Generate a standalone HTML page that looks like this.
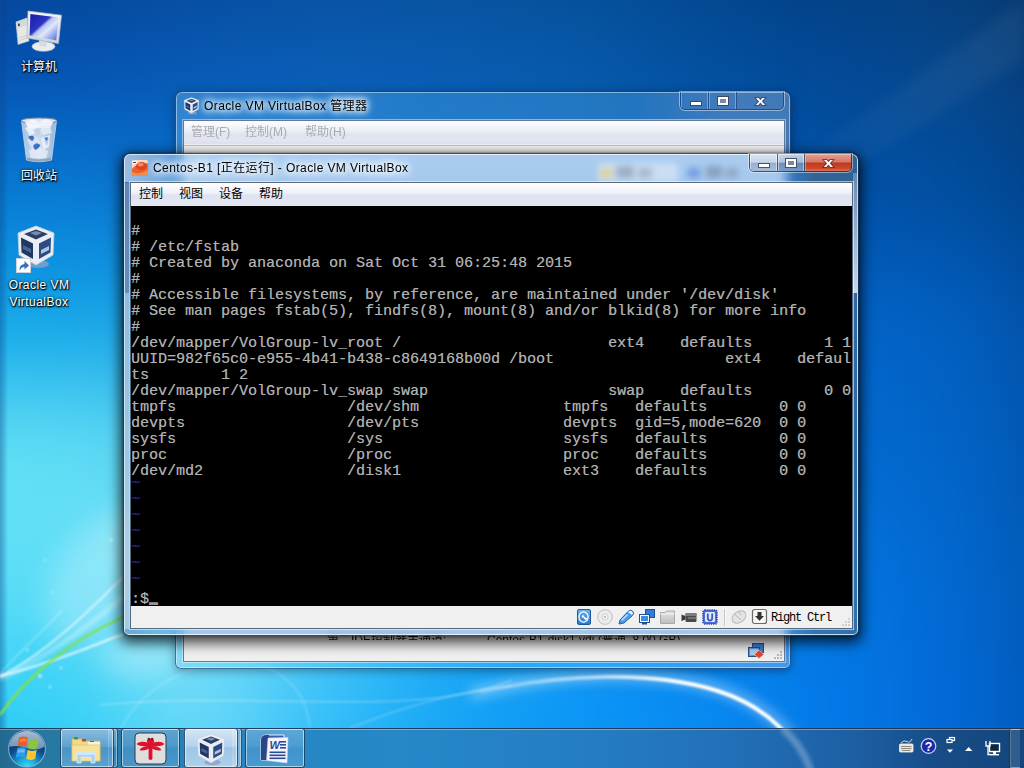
<!DOCTYPE html>
<html lang="zh-CN">
<head>
<meta charset="utf-8">
<title>Centos-B1 - Oracle VM VirtualBox</title>
<style>
html,body{margin:0;padding:0;}
body{width:1024px;height:768px;overflow:hidden;position:relative;font-family:"Liberation Sans","Noto Sans CJK SC",sans-serif;font-size:12px;color:#000;}
.abs{position:absolute;}
#wall{position:absolute;left:0;top:0;width:1024px;height:768px;overflow:hidden;
 background:
  radial-gradient(ellipse 560px 440px at 90px 570px, rgba(98,224,247,1) 0%, rgba(92,220,247,.95) 28%, rgba(35,185,240,.85) 50%, rgba(12,140,225,.55) 75%, rgba(8,110,210,0) 100%),
  radial-gradient(ellipse 760px 300px at 150px 800px, rgba(90,212,248,.95) 0%, rgba(50,190,248,.85) 45%, rgba(10,140,240,0) 100%),
  linear-gradient(90deg, rgba(0,0,0,0) 0%, rgba(0,0,0,0) 88%, rgba(0,20,60,.16) 100%),
  linear-gradient(180deg, #05479f 0%, #0755b0 12%, #0560c0 30%, #036acf 48%, #036cd4 65%, #0376e4 85%, #037aea 100%);
}
#wallsvg{position:absolute;left:0;top:0;}
/* desktop icons */
.dicon{position:absolute;width:78px;text-align:center;color:#fff;font-size:12px;line-height:17px;
 text-shadow:0 1px 2px rgba(0,0,0,0.95),0 0 3px rgba(0,0,0,0.8),1px 1px 1px rgba(0,0,0,0.9);}
.dicon svg{display:block;margin:0 auto;}
/* windows */
.win{position:absolute;border-radius:7px 7px 6px 6px;box-sizing:border-box;}
.ttl{position:absolute;white-space:nowrap;font-size:12px;line-height:16px;color:#000;
 text-shadow:0 0 6px #fff,0 0 6px #fff,0 0 9px #fff,0 0 12px rgba(255,255,255,.9);}
.capbtns{position:absolute;top:0;height:18px;border:1px solid rgba(30,50,80,.75);border-top:none;border-radius:0 0 5px 5px;box-sizing:border-box;overflow:hidden;
 box-shadow:0 0 0 1px rgba(255,255,255,.45);}
.capbtns div{position:absolute;top:0;height:18px;box-sizing:border-box;}
.menubar{position:absolute;white-space:nowrap;font-size:12px;line-height:22px;}
.menubar span{position:absolute;top:0;}
#term{position:absolute;left:131px;top:206px;width:721px;height:400px;background:#000;overflow:hidden;}
#term pre{margin:0;position:absolute;left:0;top:2px;font-family:"Liberation Mono",monospace;font-weight:normal;font-size:15px;line-height:16px;color:#b2b2b2;letter-spacing:0;text-shadow:.3px 0 0 #6a6a6a;}
#term pre i{font-style:normal;color:#15158c;position:relative;top:-4px;}
#term pre b{color:#fff;text-shadow:0 -1px 0 #fff,0 -1.6px 0 #ddd;}
/* taskbar */
#taskbar{position:absolute;left:0;top:728px;width:1024px;height:40px;overflow:hidden;
 background:linear-gradient(90deg, #22688f 0px, #26789f 40px, #267aa6 70px, #2785c0 250px, #2688c8 400px, #247cc1 600px, #2270b8 728px, #1c5ea2 860px, #174c86 940px, #14467d 1024px);
 box-shadow:inset 0 1px 0 rgba(20,40,70,.85), inset 0 2px 0 rgba(255,255,255,.35);}
.tb{position:absolute;top:0px;height:40px;box-sizing:border-box;border:1px solid rgba(20,50,80,.8);border-radius:3px;
 background:linear-gradient(180deg, rgba(255,255,255,.45) 0%, rgba(255,255,255,.25) 45%, rgba(255,255,255,.08) 50%, rgba(255,255,255,.15) 100%);
 box-shadow:inset 0 0 0 1px rgba(255,255,255,.55);}
.tb svg{margin-top:1px;}
</style>
</head>
<body>
<div id="wall"></div>
<svg id="wallmesh" width="1024" height="768" viewBox="0 0 1024 768" style="position:absolute;left:0;top:0">
<defs><filter id="meshblur" color-interpolation-filters="sRGB" filterUnits="userSpaceOnUse" x="-256" y="-256" width="1536" height="1280"><feGaussianBlur stdDeviation="55"/></filter></defs>
<g filter="url(#meshblur)">
<rect x="-256" y="-256" width="129" height="129" fill="#044190"/>
<rect x="-128" y="-256" width="129" height="129" fill="#044190"/>
<rect x="0" y="-256" width="129" height="129" fill="#044190"/>
<rect x="128" y="-256" width="129" height="129" fill="#064893"/>
<rect x="256" y="-256" width="129" height="129" fill="#084b95"/>
<rect x="384" y="-256" width="129" height="129" fill="#074b91"/>
<rect x="512" y="-256" width="129" height="129" fill="#05498d"/>
<rect x="640" y="-256" width="129" height="129" fill="#024183"/>
<rect x="768" y="-256" width="129" height="129" fill="#013b7a"/>
<rect x="896" y="-256" width="129" height="129" fill="#063b72"/>
<rect x="1024" y="-256" width="129" height="129" fill="#062e5b"/>
<rect x="1152" y="-256" width="129" height="129" fill="#062e5b"/>
<rect x="-256" y="-128" width="129" height="129" fill="#044190"/>
<rect x="-128" y="-128" width="129" height="129" fill="#044190"/>
<rect x="0" y="-128" width="129" height="129" fill="#044190"/>
<rect x="128" y="-128" width="129" height="129" fill="#064893"/>
<rect x="256" y="-128" width="129" height="129" fill="#084b95"/>
<rect x="384" y="-128" width="129" height="129" fill="#074b91"/>
<rect x="512" y="-128" width="129" height="129" fill="#05498d"/>
<rect x="640" y="-128" width="129" height="129" fill="#024183"/>
<rect x="768" y="-128" width="129" height="129" fill="#013b7a"/>
<rect x="896" y="-128" width="129" height="129" fill="#063b72"/>
<rect x="1024" y="-128" width="129" height="129" fill="#062e5b"/>
<rect x="1152" y="-128" width="129" height="129" fill="#062e5b"/>
<rect x="-256" y="0" width="129" height="129" fill="#0550b0"/>
<rect x="-128" y="0" width="129" height="129" fill="#0550b0"/>
<rect x="0" y="0" width="129" height="129" fill="#0550b0"/>
<rect x="128" y="0" width="129" height="129" fill="#0858b4"/>
<rect x="256" y="0" width="129" height="129" fill="#0a5cb6"/>
<rect x="384" y="0" width="129" height="129" fill="#095cb2"/>
<rect x="512" y="0" width="129" height="129" fill="#075aac"/>
<rect x="640" y="0" width="129" height="129" fill="#0350a0"/>
<rect x="768" y="0" width="129" height="129" fill="#024896"/>
<rect x="896" y="0" width="129" height="129" fill="#08488c"/>
<rect x="1024" y="0" width="129" height="129" fill="#083870"/>
<rect x="1152" y="0" width="129" height="129" fill="#083870"/>
<rect x="-256" y="128" width="129" height="129" fill="#087ad4"/>
<rect x="-128" y="128" width="129" height="129" fill="#087ad4"/>
<rect x="0" y="128" width="129" height="129" fill="#087ad4"/>
<rect x="128" y="128" width="129" height="129" fill="#0a70cd"/>
<rect x="256" y="128" width="129" height="129" fill="#0969c6"/>
<rect x="384" y="128" width="129" height="129" fill="#0762be"/>
<rect x="512" y="128" width="129" height="129" fill="#055cb6"/>
<rect x="640" y="128" width="129" height="129" fill="#0356ae"/>
<rect x="768" y="128" width="129" height="129" fill="#0250a6"/>
<rect x="896" y="128" width="129" height="129" fill="#004ea0"/>
<rect x="1024" y="128" width="129" height="129" fill="#003c80"/>
<rect x="1152" y="128" width="129" height="129" fill="#003c80"/>
<rect x="-256" y="256" width="129" height="129" fill="#10a6e9"/>
<rect x="-128" y="256" width="129" height="129" fill="#10a6e9"/>
<rect x="0" y="256" width="129" height="129" fill="#10a6e9"/>
<rect x="128" y="256" width="129" height="129" fill="#1ea0e6"/>
<rect x="256" y="256" width="129" height="129" fill="#148cde"/>
<rect x="384" y="256" width="129" height="129" fill="#0a7dd7"/>
<rect x="512" y="256" width="129" height="129" fill="#0670d0"/>
<rect x="640" y="256" width="129" height="129" fill="#0369cc"/>
<rect x="768" y="256" width="129" height="129" fill="#0265ca"/>
<rect x="896" y="256" width="129" height="129" fill="#025fc0"/>
<rect x="1024" y="256" width="129" height="129" fill="#024a99"/>
<rect x="1152" y="256" width="129" height="129" fill="#024a99"/>
<rect x="-256" y="384" width="129" height="129" fill="#64e1f5"/>
<rect x="-128" y="384" width="129" height="129" fill="#64e1f5"/>
<rect x="0" y="384" width="129" height="129" fill="#64e1f5"/>
<rect x="128" y="384" width="129" height="129" fill="#5acdf3"/>
<rect x="256" y="384" width="129" height="129" fill="#32afee"/>
<rect x="384" y="384" width="129" height="129" fill="#1996e8"/>
<rect x="512" y="384" width="129" height="129" fill="#0a82e1"/>
<rect x="640" y="384" width="129" height="129" fill="#0573d7"/>
<rect x="768" y="384" width="129" height="129" fill="#026ad0"/>
<rect x="896" y="384" width="129" height="129" fill="#0264c8"/>
<rect x="1024" y="384" width="129" height="129" fill="#024ea0"/>
<rect x="1152" y="384" width="129" height="129" fill="#024ea0"/>
<rect x="-256" y="512" width="129" height="129" fill="#5fdef7"/>
<rect x="-128" y="512" width="129" height="129" fill="#5fdef7"/>
<rect x="0" y="512" width="129" height="129" fill="#5fdef7"/>
<rect x="128" y="512" width="129" height="129" fill="#78def6"/>
<rect x="256" y="512" width="129" height="129" fill="#50c8f5"/>
<rect x="384" y="512" width="129" height="129" fill="#28aaf0"/>
<rect x="512" y="512" width="129" height="129" fill="#1294ec"/>
<rect x="640" y="512" width="129" height="129" fill="#0882e6"/>
<rect x="768" y="512" width="129" height="129" fill="#0376e1"/>
<rect x="896" y="512" width="129" height="129" fill="#0268d0"/>
<rect x="1024" y="512" width="129" height="129" fill="#0251a6"/>
<rect x="1152" y="512" width="129" height="129" fill="#0251a6"/>
<rect x="-256" y="640" width="129" height="129" fill="#34d0f7"/>
<rect x="-128" y="640" width="129" height="129" fill="#34d0f7"/>
<rect x="0" y="640" width="129" height="129" fill="#34d0f7"/>
<rect x="128" y="640" width="129" height="129" fill="#7ddef7"/>
<rect x="256" y="640" width="129" height="129" fill="#3ac3fa"/>
<rect x="384" y="640" width="129" height="129" fill="#18a7f5"/>
<rect x="512" y="640" width="129" height="129" fill="#0c96f7"/>
<rect x="640" y="640" width="129" height="129" fill="#088af2"/>
<rect x="768" y="640" width="129" height="129" fill="#0378e8"/>
<rect x="896" y="640" width="129" height="129" fill="#0268d6"/>
<rect x="1024" y="640" width="129" height="129" fill="#0251ab"/>
<rect x="1152" y="640" width="129" height="129" fill="#0251ab"/>
<rect x="-256" y="768" width="129" height="129" fill="#17c1f7"/>
<rect x="-128" y="768" width="129" height="129" fill="#17c1f7"/>
<rect x="0" y="768" width="129" height="129" fill="#17c1f7"/>
<rect x="128" y="768" width="129" height="129" fill="#38cef7"/>
<rect x="256" y="768" width="129" height="129" fill="#1ab5fa"/>
<rect x="384" y="768" width="129" height="129" fill="#0a9bf5"/>
<rect x="512" y="768" width="129" height="129" fill="#0c96f7"/>
<rect x="640" y="768" width="129" height="129" fill="#088af2"/>
<rect x="768" y="768" width="129" height="129" fill="#0378e8"/>
<rect x="896" y="768" width="129" height="129" fill="#0268d6"/>
<rect x="1024" y="768" width="129" height="129" fill="#0251ab"/>
<rect x="1152" y="768" width="129" height="129" fill="#0251ab"/>
<rect x="-256" y="896" width="129" height="129" fill="#17c1f7"/>
<rect x="-128" y="896" width="129" height="129" fill="#17c1f7"/>
<rect x="0" y="896" width="129" height="129" fill="#17c1f7"/>
<rect x="128" y="896" width="129" height="129" fill="#38cef7"/>
<rect x="256" y="896" width="129" height="129" fill="#1ab5fa"/>
<rect x="384" y="896" width="129" height="129" fill="#0a9bf5"/>
<rect x="512" y="896" width="129" height="129" fill="#0c96f7"/>
<rect x="640" y="896" width="129" height="129" fill="#088af2"/>
<rect x="768" y="896" width="129" height="129" fill="#0378e8"/>
<rect x="896" y="896" width="129" height="129" fill="#0268d6"/>
<rect x="1024" y="896" width="129" height="129" fill="#0251ab"/>
<rect x="1152" y="896" width="129" height="129" fill="#0251ab"/>
</g></svg>
<svg id="wallsvg" width="1024" height="768" viewBox="0 0 1024 768">
 <defs>
  <filter id="bl2" color-interpolation-filters="sRGB"><feGaussianBlur stdDeviation="2"/></filter>
  <filter id="bl1" color-interpolation-filters="sRGB"><feGaussianBlur stdDeviation="0.8"/></filter>
  <filter id="bl14" color-interpolation-filters="sRGB" x="-50%" y="-50%" width="200%" height="200%"><feGaussianBlur stdDeviation="14"/></filter>
  <filter id="bl6" color-interpolation-filters="sRGB"><feGaussianBlur stdDeviation="6"/></filter>
  <linearGradient id="edgeL" x1="0" x2="1" y1="0" y2="0"><stop offset="0" stop-color="#0a4a90" stop-opacity=".42"/><stop offset="1" stop-color="#062c70" stop-opacity="0"/></linearGradient>
  <linearGradient id="arcg" gradientUnits="userSpaceOnUse" x1="470" y1="0" x2="820" y2="0"><stop offset="0" stop-color="#fff" stop-opacity=".15"/><stop offset=".3" stop-color="#fff" stop-opacity=".55"/><stop offset=".6" stop-color="#fff" stop-opacity="1"/><stop offset="1" stop-color="#fff" stop-opacity="1"/></linearGradient>
  <linearGradient id="ray" x1="1" y1="0" x2="0" y2="1"><stop offset="0" stop-color="#9ab" stop-opacity=".09"/><stop offset="1" stop-color="#fff" stop-opacity="0"/></linearGradient>
 </defs>
 <rect x="0" y="0" width="8" height="768" fill="url(#edgeL)"/>
 <polygon points="1024,0 1024,60 760,230 700,230" fill="url(#ray)" filter="url(#bl6)"/>
 <!-- big white arc bottom right -->
 <path d="M470 694 C560 672 650 668 720 690 C770 706 800 740 812 775" fill="none" stroke="#fff" stroke-opacity=".35" stroke-width="12" filter="url(#bl6)"/>
 <path d="M480 692 C560 674 650 670 718 691 C768 707 798 740 810 775" fill="none" stroke="url(#arcg)" stroke-width="4" filter="url(#bl1)"/>
 <!-- faint arcs bottom middle -->
 <path d="M120 730 C160 650 300 630 310 728" fill="none" stroke="#fff" stroke-opacity=".18" stroke-width="2" filter="url(#bl1)"/>
 <path d="M100 705 C250 690 420 720 512 680" fill="none" stroke="#fff" stroke-opacity=".22" stroke-width="2" filter="url(#bl1)"/>
 <path d="M350 728 C420 700 470 690 512 686" fill="none" stroke="#fff" stroke-opacity=".2" stroke-width="2" filter="url(#bl1)"/>
 <!-- left streaks -->
 <ellipse cx="100" cy="575" rx="42" ry="75" fill="#fff" fill-opacity=".26" filter="url(#bl14)" transform="rotate(35 100 575)"/>
 <ellipse cx="140" cy="655" rx="42" ry="22" fill="#fff" fill-opacity=".3" filter="url(#bl14)"/>
 <path d="M0 677 C50 650 90 610 124 576" fill="none" stroke="#fff" stroke-opacity=".6" stroke-width="2" filter="url(#bl1)"/>
 <path d="M0 679 C50 655 95 622 124 596" fill="none" stroke="#fff" stroke-opacity=".4" stroke-width="4" filter="url(#bl2)"/>
 <path d="M0 676 C60 661 100 642 124 634" fill="none" stroke="#fff" stroke-opacity=".7" stroke-width="2.4" filter="url(#bl1)"/>
 <path d="M0 674 C20 650 45 630 62 610" fill="none" stroke="#fff" stroke-opacity=".3" stroke-width="1.5" filter="url(#bl1)"/>
 <path d="M0 715 C30 672 75 638 124 617" fill="none" stroke="#84e048" stroke-opacity="1" stroke-width="2.4" filter="url(#bl1)"/>
 <g fill="#fff" fill-opacity=".7" filter="url(#bl1)"><circle cx="111" cy="540" r="1.6"/><circle cx="45" cy="560" r="1"/><circle cx="27" cy="650" r="1.2"/><circle cx="53" cy="592" r="1"/><circle cx="40" cy="676" r="1.8"/><circle cx="61" cy="668" r="1.2"/><circle cx="50" cy="687" r="1.2"/></g>
</svg>

<svg width="0" height="0" style="position:absolute">
 <defs>
  <linearGradient id="scr" x1="0" y1="0" x2="1" y2="1"><stop offset="0" stop-color="#1a1aa0"/><stop offset=".4" stop-color="#2a36c4"/><stop offset=".47" stop-color="#b8c2f2"/><stop offset=".62" stop-color="#e2e8fb"/><stop offset="1" stop-color="#4a60dc"/></linearGradient>
  <linearGradient id="bez" x1="0" y1="0" x2="0" y2="1"><stop offset="0" stop-color="#f4f7fb"/><stop offset="1" stop-color="#c9d2dd"/></linearGradient>
  <linearGradient id="bin" x1="0" y1="0" x2="1" y2="0"><stop offset="0" stop-color="#b9cde6"/><stop offset=".5" stop-color="#e6eef8"/><stop offset="1" stop-color="#a9bfdc"/></linearGradient>
  <linearGradient id="cubeL" x1="0" y1="0" x2="1" y2="1"><stop offset="0" stop-color="#f2f5fa"/><stop offset="1" stop-color="#aebcd4"/></linearGradient>
  <symbol id="vbox" viewBox="0 0 40 44">
   <ellipse cx="22" cy="39" rx="11" ry="4" fill="#8aa0c4" opacity=".8"/>
   <path d="M20 1 L38 8 L37 30 L20 40 L3 30 L2 8 Z" fill="#e9eef6" stroke="#c2cde0" stroke-width=".8" stroke-linejoin="round"/>
   <path d="M20 4.5 L32 9 L20 14.5 L8 9 Z" fill="#2b3f66"/>
   <path d="M5 12.5 L17 18.5 L17 34 L5.5 27.5 Z" fill="#1f3763"/>
   <path d="M23 18.5 L35 12.5 L34.5 27.5 L23 34 Z" fill="#2c4a84"/>
   <path d="M14 8 l6 -2 l6 2 l-6 2.4z" fill="#8fa0bd" opacity=".8"/>
   <path d="M7 20 l8 4 v4 l-8 -4z" fill="#5d78a8" opacity=".7"/>
   <path d="M25 25 l8 -4 v4 l-8 4z" fill="#c9d6ee" opacity=".85"/>
  </symbol>
 </defs>
</svg>
<div class="dicon" style="left:0;top:8px;">
 <svg width="52" height="48" viewBox="0 0 52 48">
  <path d="M3 14 L14 10 L16 33 L5 36.5 Z" fill="#e6e8e3" stroke="#b8bfc4" stroke-width=".6"/>
  <path d="M3 14 L14 10 L14.4 17 L3.4 21 Z" fill="#d3d8da"/>
  <rect x="5" y="15.6" width="1.8" height="2.4" fill="#364a2e"/>
  <path d="M6 30 L15 27 M6.2 32.5 L15.2 29.5" stroke="#c3c9cc" stroke-width=".8"/>
  <ellipse cx="30.5" cy="38.5" rx="11.5" ry="4.8" fill="#e9edf0" stroke="#b5bdc6" stroke-width=".7"/>
  <path d="M26 31 L34 33 L33.5 39 L26.5 38 Z" fill="#d5dbe2"/>
  <path d="M15 3 L48.5 7.2 L45.5 35.6 L14 30 Z" fill="url(#bez)" stroke="#aeb8c6" stroke-width=".7" stroke-linejoin="round"/>
  <path d="M17.4 6 L45.6 9.6 L43.2 32.2 L16.6 27.4 Z" fill="url(#scr)"/>
 </svg>
 <div style="margin-top:3px">计算机</div>
</div>
<div class="dicon" style="left:0;top:116px;">
 <svg width="40" height="48" viewBox="0 0 40 48">
  <path d="M2.5 4.5 L37.5 4.5 L32.5 44 Q20 47.5 7.5 44 Z" fill="url(#bin)" fill-opacity=".88" stroke="#c9d8ec" stroke-width=".8"/>
  <ellipse cx="20" cy="4.8" rx="17.5" ry="2.8" fill="#dbe6f3" stroke="#7f8ea4" stroke-width="1.1"/>
  <path d="M6 6 L14 3 L20 6.5 L27 2.5 L34 6 L31 12 L9 12 Z" fill="#f2f6fb" opacity=".95"/>
  <path d="M9.5 21 q4 -3 6 1 l-2 3 q-3 -1 -4 -4z M14 30 q3 -5 7 -1 q-1 4 -5 5z M25 22 l4 -1 l-1 4z" fill="#2f66c8" opacity=".85"/>
  <g opacity=".8"><path d="M6 12 L14 9 L18 16 L11 20Z" fill="#f4f7fb"/><path d="M19 10 L30 8 L33 17 L24 19Z" fill="#e9eef6"/><path d="M8 24 L16 20 L22 27 L13 33Z" fill="#dfe7f2"/><path d="M22 22 L31 19 L30 31 L24 34Z" fill="#f0f4fa"/><path d="M10 34 L20 31 L29 35 L27 42 L12 42Z" fill="#e6ecf5"/><path d="M14 14 L22 12 L20 22Z" fill="#c2cfe2"/><path d="M25 24 L30 22 L28 30Z" fill="#bccbe0"/></g>
  <path d="M9.5 21 q4 -3 6 1 l-2 3 q-3 -1 -4 -4z M14 30 q3 -5 7 -1 q-1 4 -5 5z M25 22 l4 -1 l-1 4z" fill="#2f66c8" opacity=".85"/>
  <path d="M8 44 Q20 47.5 32 44 L32.3 41.5 Q20 45 7.7 41.5Z" fill="#8f98a6" opacity=".8"/>
 </svg>
 <div style="margin-top:4px">回收站</div>
</div>
<div class="dicon" style="left:0;top:225px;">
 <div style="position:relative;width:48px;height:48px;margin:0 auto;">
  <svg width="40" height="44" style="position:absolute;left:1px;top:0"><use href="#vbox" width="40" height="44"/></svg>
  <svg width="15" height="15" viewBox="0 0 15 15" style="position:absolute;left:1px;top:33px">
   <rect x=".5" y=".5" width="14" height="14" fill="#fdfdfd" stroke="#c9d2de"/>
   <path d="M3.5 13 Q3 6.5 8.5 6 L8.5 3 L13 7.5 L8.5 11.5 L8.5 9 Q5 9 3.5 13Z" fill="#2f6fc4"/>
  </svg>
 </div>
 <div style="margin-top:4px;line-height:17px;letter-spacing:.45px">Oracle VM<br>VirtualBox</div>
</div>

<div class="win" id="bw" style="left:175px;top:91px;width:616px;height:578px;border:1px solid rgba(10,30,70,.55);
 background:linear-gradient(90deg, rgba(140,215,255,.3) 0%, rgba(110,210,255,.25) 40%, rgba(120,205,255,.26) 75%, rgba(190,205,235,.34) 90%, rgba(190,205,235,.34) 100%);
 -webkit-backdrop-filter:blur(3px);backdrop-filter:blur(3px);
 box-shadow:inset 0 0 0 1px rgba(255,255,255,.45), 0 2px 10px rgba(0,0,0,.35);">
 <svg width="17" height="18" style="position:absolute;left:7px;top:5px"><use href="#vbox" width="17" height="18"/></svg>
 <div class="ttl" style="left:28px;top:6px;letter-spacing:.4px;">Oracle VM VirtualBox 管理器</div>
 <div class="capbtns" style="left:504px;width:104px;border-color:rgba(15,40,90,.55);">
  <div style="left:0;width:28px;border-right:1px solid rgba(15,40,90,.5);box-shadow:inset -1px 0 0 rgba(255,255,255,.3), inset 1px 0 0 rgba(255,255,255,.3)"></div>
  <div style="left:28px;width:28px;border-right:1px solid rgba(15,40,90,.5);box-shadow:inset -1px 0 0 rgba(255,255,255,.3), inset 1px 0 0 rgba(255,255,255,.3)"></div>
  <svg width="104" height="18" viewBox="0 0 104 18" style="position:absolute;left:-1px;top:0">
   <rect x="10.5" y="9.5" width="11" height="4" fill="#fff" stroke="#3a4a66" stroke-width="1"/>
   <rect x="39" y="6" width="8" height="6" fill="none" stroke="#3a4a66" stroke-width="4"/>
   <rect x="39" y="6" width="8" height="6" fill="#7b8aa6" stroke="#fff" stroke-width="2"/>
   <text x="80.5" y="13.4" font-family="Liberation Sans,sans-serif" font-weight="bold" font-size="13.5" text-anchor="middle" fill="#fff" stroke="#3a4a66" stroke-opacity=".85" stroke-width="1.8" paint-order="stroke" transform="translate(80.5 0) scale(1.25 1) translate(-80.5 0)">x</text>
  </svg>
 </div>
 <!-- client -->
 <div style="position:absolute;left:7px;top:28px;width:602px;height:542px;box-sizing:border-box;border:1px solid rgba(40,70,110,.7);background:#f0f0f0;overflow:hidden;box-shadow:0 0 0 1px rgba(255,255,255,.45);">
  <div class="menubar" style="left:0;top:0;width:600px;height:23px;background:linear-gradient(180deg,#fdfdff 0%,#eef0f8 40%,#dfe3f1 60%,#e6e9f4 100%);border-bottom:1px solid #f7f8fc;color:#aaaab2;">
   <span style="left:7px">管理(F)</span><span style="left:61px">控制(M)</span><span style="left:121px">帮助(H)</span>
  </div>
  <div style="position:absolute;left:0;top:24px;width:600px;height:60px;background:linear-gradient(180deg,#fbfbfb 0%,#e9e9e9 100%);border-top:1px solid #c9c9c9;"></div>
  <!-- bottom visible part -->
  <div style="position:absolute;left:0;top:500px;width:600px;height:40px;background:#f0f0f0;"></div>
  <div style="position:absolute;left:0;top:513px;width:600px;height:6px;overflow:hidden;">
   <div style="position:absolute;left:143px;top:-1px;font-size:12px;line-height:14px;white-space:nowrap;color:#111;">第二IDE控制器主通道:</div>
   <div style="position:absolute;left:303px;top:-1px;font-size:12px;line-height:14px;white-space:nowrap;color:#111;">Centos-B1-disk1.vdi (普通, 8.00 GB)</div>
  </div>
  <svg width="18" height="17" viewBox="0 0 18 17" style="position:absolute;left:563px;top:521px">
   <rect x="5.5" y="1.5" width="11" height="9" fill="#3d7fd0" stroke="#2a4f86"/>
   <rect x="1.5" y="5.5" width="11" height="9" fill="#5b9be2" stroke="#2a4f86"/>
   <rect x="3" y="7" width="8" height="6" fill="#a9cdf4"/>
   <path d="M12 8 L17 12.5 L12 16.5 L7.5 12.5 Z" fill="#e0482c" stroke="#f6c7b8" stroke-width=".8"/>
  </svg>
  <svg width="10" height="10" viewBox="0 0 10 10" style="position:absolute;left:589px;top:529px"><g fill="#b8b8b8"><rect x="7" y="1" width="2" height="2"/><rect x="7" y="4" width="2" height="2"/><rect x="4" y="4" width="2" height="2"/><rect x="7" y="7" width="2" height="2"/><rect x="4" y="7" width="2" height="2"/><rect x="1" y="7" width="2" height="2"/></g></svg>
 </div>
</div>

<div class="win" id="fw" style="left:123px;top:153px;width:736px;height:483px;border:1px solid rgba(10,25,50,.7);
 background:linear-gradient(90deg, rgba(85,125,180,.55) 0px, rgba(96,164,232,.52) 52px, rgba(96,164,232,.52) 662px, rgba(85,112,140,.55) 690px, rgba(85,112,135,.55) 736px);
 -webkit-backdrop-filter:blur(4px);backdrop-filter:blur(4px);
 box-shadow:inset 0 0 0 1px rgba(255,255,255,.75), 0 4px 13px 3px rgba(0,0,0,.72), 0 0 3px rgba(0,0,0,.5);">
 <div style="position:absolute;left:0;top:0;width:734px;height:28px;border-radius:6px 6px 0 0;background:linear-gradient(90deg, rgba(228,236,246,.6) 0px, rgba(228,236,246,.35) 40px, rgba(228,236,246,0) 90px);"></div>
 <!-- title icon -->
 <svg width="16" height="16" viewBox="0 0 16 16" style="position:absolute;left:8px;top:6px">
  <rect x="0" y="0" width="16" height="16" rx="1.5" fill="#f6d9c8"/>
  <path d="M0 16 L0 9 Q4 4 10 5 L16 3 L16 16 Z" fill="#e8602c"/>
  <ellipse cx="9.5" cy="6" rx="5.5" ry="4" fill="#e0401c"/>
  <ellipse cx="8.5" cy="4.6" rx="3.2" ry="1.8" fill="#f59a7a" opacity=".8"/>
  <path d="M0 16 L0 12 Q8 15 16 10 L16 16Z" fill="#f28a4a"/>
  <rect x="0" y="1" width="5" height="3" fill="#f7f1ea"/>
  <rect x="1" y="2" width="3" height="1" fill="#444"/>
 </svg>
 <div class="ttl" style="left:29px;top:6px;letter-spacing:.4px;">Centos-B1 [正在运行] - Oracle VM VirtualBox</div>
 <!-- blurred blobs behind glass -->
 <div style="position:absolute;left:474px;top:9px;width:80px;height:19px;background:rgba(255,255,255,.4);filter:blur(3px);"></div>
 <div style="position:absolute;left:474px;top:12px;width:60px;height:14px;filter:blur(3px);opacity:.5;">
  <div style="position:absolute;left:2px;top:2px;width:12px;height:10px;background:#e9c84a"></div>
  <div style="position:absolute;left:18px;top:0;width:18px;height:12px;background:#6f7f9a"></div>
  <div style="position:absolute;left:40px;top:2px;width:14px;height:10px;background:#8a93a6"></div>
 </div>
 <div style="position:absolute;left:562px;top:12px;width:60px;height:14px;filter:blur(3px);opacity:.5;">
  <div style="position:absolute;left:2px;top:2px;width:12px;height:10px;background:#3d6fd8"></div>
  <div style="position:absolute;left:20px;top:0;width:16px;height:12px;background:#6a7a90"></div>
  <div style="position:absolute;left:40px;top:2px;width:12px;height:10px;background:#7a8598"></div>
 </div>
 <div class="capbtns" style="left:625px;width:103px;border-color:rgba(40,50,70,.8);">
  <div style="left:0;width:28px;border-right:1px solid rgba(40,50,70,.75);background:linear-gradient(180deg,rgba(222,231,243,.9) 0%,rgba(200,213,232,.9) 45%,rgba(150,172,204,.9) 52%,rgba(165,188,220,.9) 100%);box-shadow:inset 0 0 0 1px rgba(255,255,255,.5)"></div>
  <div style="left:28px;width:27px;border-right:1px solid rgba(40,50,70,.75);background:linear-gradient(180deg,rgba(205,218,236,.9) 0%,rgba(176,196,222,.9) 45%,rgba(108,138,182,.9) 52%,rgba(125,158,204,.9) 100%);box-shadow:inset 0 0 0 1px rgba(255,255,255,.45)"></div>
  <div style="left:55px;width:47px;background:linear-gradient(180deg,#e2a092 0%,#d57a66 42%,#c2391e 52%,#cc4a2e 80%,#df8466 100%);box-shadow:inset 0 0 0 1px rgba(255,255,255,.35)"></div>
  <svg width="103" height="18" viewBox="0 0 103 18" style="position:absolute;left:-1px;top:0">
   <rect x="9.5" y="9.5" width="11" height="4" fill="#fff" stroke="#4a5366" stroke-width="1"/>
   <rect x="38" y="6" width="8" height="6" fill="none" stroke="#454e62" stroke-width="4"/>
   <rect x="38" y="6" width="8" height="6" fill="#7d879c" stroke="#fff" stroke-width="2"/>
   <text x="79.4" y="13.4" font-family="Liberation Sans,sans-serif" font-weight="bold" font-size="13.5" text-anchor="middle" fill="#fff" stroke="#6a2a20" stroke-opacity=".8" stroke-width="1.8" paint-order="stroke" transform="translate(79.4 0) scale(1.25 1) translate(-79.4 0)">x</text>
  </svg>
 </div>
 <div style="position:absolute;left:729px;top:19px;width:4px;height:120px;background:linear-gradient(180deg, rgba(170,185,210,.45), rgba(225,235,248,.85));"></div>
 <div style="position:absolute;left:1px;top:29px;width:4px;height:110px;background:rgba(150,150,172,.45);"></div>
 <div style="position:absolute;left:1px;top:139px;width:4px;height:336px;background:rgba(225,238,250,.5);"></div>
 <!-- client -->
 <div style="position:absolute;left:6px;top:28px;width:723px;height:447px;box-sizing:border-box;border:1px solid rgba(60,80,105,.85);background:#f0f0f0;overflow:hidden;box-shadow:0 0 0 1px rgba(255,255,255,.55);"></div>
</div>
<div class="menubar" style="left:131px;top:183px;width:721px;height:23px;background:linear-gradient(180deg,#ffffff 0%,#f1f3fa 40%,#dfe3f1 55%,#e3e7f3 100%);color:#000;">
 <span style="left:8px">控制</span><span style="left:48px">视图</span><span style="left:88px">设备</span><span style="left:128px">帮助</span>
</div>
<div id="term"><pre>

#
# /etc/fstab
# Created by anaconda on Sat Oct 31 06:25:48 2015
#
# Accessible filesystems, by reference, are maintained under '/dev/disk'
# See man pages fstab(5), findfs(8), mount(8) and/or blkid(8) for more info
#
/dev/mapper/VolGroup-lv_root /                       ext4    defaults        1 1
UUID=982f65c0-e955-4b41-b438-c8649168b00d /boot                   ext4    defaul
ts        1 2
/dev/mapper/VolGroup-lv_swap swap                    swap    defaults        0 0
tmpfs                   /dev/shm                tmpfs   defaults        0 0
devpts                  /dev/pts                devpts  gid=5,mode=620  0 0
sysfs                   /sys                    sysfs   defaults        0 0
proc                    /proc                   proc    defaults        0 0
/dev/md2                /disk1                  ext3    defaults        0 0
<i>~</i>
<i>~</i>
<i>~</i>
<i>~</i>
<i>~</i>
<i>~</i>
<i>~</i>
:$<b>_</b></pre></div>
<div id="sbar" style="position:absolute;left:131px;top:606px;width:721px;height:22px;background:#f0f0f0;overflow:hidden;">
 <svg width="300" height="22" viewBox="0 0 300 22" style="position:absolute;left:440px;top:0">
  <defs>
   <linearGradient id="gblue" x1="0" y1="0" x2="0" y2="1"><stop offset="0" stop-color="#6fb4f0"/><stop offset="1" stop-color="#2a76c8"/></linearGradient>
   <linearGradient id="ggrey" x1="0" y1="0" x2="0" y2="1"><stop offset="0" stop-color="#e4e4e4"/><stop offset="1" stop-color="#bdbdbd"/></linearGradient>
  </defs>
  <!-- hdd -->
  <g transform="translate(6 3)">
   <rect x=".5" y=".5" width="13" height="15" rx="1.5" fill="url(#gblue)" stroke="#1d5aa6"/>
   <ellipse cx="6.5" cy="8" rx="4.6" ry="5.2" fill="none" stroke="#fff" stroke-width="1.3"/>
   <path d="M6 7 L11 10 L8 11 Z" fill="#fff"/>
   <circle cx="6" cy="7.5" r="1.2" fill="#fff"/>
  </g>
  <!-- cd -->
  <g transform="translate(26 3)">
   <circle cx="8" cy="8" r="7.3" fill="#ececec" stroke="#bfbfbf"/>
   <circle cx="8" cy="8" r="3" fill="#f6f6f6" stroke="#c4c4c4" stroke-width=".8"/>
   <circle cx="8" cy="8" r="1" fill="#aaa"/>
  </g>
  <!-- usb -->
  <g transform="translate(47 3)">
   <path d="M1 15 L2 11 L10 2.5 Q12.5 0 15 2.5 Q16.5 4.5 14.5 6.5 L6 14 Z" fill="#4f9be6" stroke="#1f62b6" stroke-width="1"/>
   <path d="M10 3 Q12.5 .8 14.5 3 Q15.5 4.5 14 6 Z" fill="#f2f6fb"/>
   <path d="M3.5 11.5 L9.5 5.5" stroke="#bfe0ff" stroke-width="1.4"/>
  </g>
  <!-- net -->
  <g transform="translate(68 3)">
   <rect x="6.5" y=".5" width="9" height="8" fill="#2f7fda" stroke="#1c4f96"/>
   <rect x=".5" y="5.5" width="10" height="8" fill="#fff" stroke="#1c4f96"/>
   <rect x="2" y="7" width="7" height="5" fill="#3d8de2"/>
   <rect x="3" y="14" width="5" height="1.5" fill="#1c4f96"/>
  </g>
  <!-- folder -->
  <g transform="translate(89 3)">
   <path d="M.5 3.5 L5 3.5 L6.5 2 L14.5 2 L14.5 14.5 L.5 14.5 Z" fill="url(#ggrey)" stroke="#a9a9a9"/>
   <path d="M.5 5 L14.5 5" stroke="#f6f6f6"/>
  </g>
  <!-- camera -->
  <g transform="translate(110 3)">
   <rect x="4.5" y="4" width="11" height="9" rx="1" fill="#4a4a4a"/>
   <rect x="4.5" y="4" width="11" height="3" rx="1" fill="#7d7d7d"/>
   <path d="M0.5 5.5 L4.5 7 L4.5 10.5 L0.5 12 Z" fill="#3a3a3a"/>
   <rect x="7" y="8.5" width="8" height="1" fill="#9a9a9a"/>
  </g>
  <!-- cpu -->
  <g transform="translate(131 3)">
   <rect x="1" y="1" width="14" height="14" rx="2" fill="#4d6fd6" stroke="#2c49a8" stroke-dasharray="1.2 1" stroke-width="1.6"/>
   <rect x="3" y="3" width="10" height="10" rx="1.2" fill="#dfe8fb"/>
   <path d="M5.8 4.5 V9 Q5.8 11.5 8 11.5 Q10.2 11.5 10.2 9 V4.5" fill="none" stroke="#3b5cc4" stroke-width="1.8"/>
  </g>
  <rect x="153" y="3" width="1" height="17" fill="#c6c6c6"/><rect x="154" y="3" width="1" height="17" fill="#fafafa"/>
  <!-- mouse -->
  <g transform="translate(160 3)">
   <ellipse cx="8" cy="8" rx="7.6" ry="5.4" transform="rotate(-35 8 8)" fill="#e3e3e3" stroke="#b9b9b9"/>
   <path d="M4 5.5 L9.5 10.5 M7.5 2.8 L10 6" stroke="#b0b0b0" stroke-width="1" fill="none"/>
  </g>
  <!-- key -->
  <g transform="translate(181 3)">
   <rect x=".5" y=".5" width="14" height="14" rx="2" fill="#f7f5f2" stroke="#6e6a66" stroke-width="1.2"/>
   <path d="M5.5 3 H9.5 V7 H12 L7.5 11.8 L3 7 H5.5 Z" fill="#333"/>
  </g>
 </svg>

 <div style="position:absolute;left:640px;top:5px;font-family:'Liberation Mono',monospace;font-size:12px;line-height:14px;letter-spacing:-1.2px;color:#000;white-space:pre;">Right Ctrl</div>
 <svg width="10" height="10" viewBox="0 0 10 10" style="position:absolute;left:710px;top:11px"><g fill="#cfcfcf"><rect x="7" y="1" width="2" height="2"/><rect x="7" y="4" width="2" height="2"/><rect x="4" y="4" width="2" height="2"/><rect x="7" y="7" width="2" height="2"/><rect x="4" y="7" width="2" height="2"/><rect x="1" y="7" width="2" height="2"/></g></svg>
</div>

<div id="taskbar">
 <svg width="1024" height="40" viewBox="0 728 1024 40" style="position:absolute;left:0;top:0"><path d="M782 728 C796 740 806 755 812 775" fill="none" stroke="#fff" stroke-opacity=".28" stroke-width="7" filter="url(#bl2)"/></svg>
 <!-- start orb -->
 <svg width="54" height="40" viewBox="0 0 54 40" style="position:absolute;left:0;top:0">
  <defs>
   <radialGradient id="orb" cx=".5" cy="1" r=".75"><stop offset="0" stop-color="#38e0f6"/><stop offset=".35" stop-color="#1aa4d8"/><stop offset=".75" stop-color="#0c4a8c"/><stop offset="1" stop-color="#0a3a74"/></radialGradient>
   <linearGradient id="orbhi" x1="0" y1="0" x2="0" y2="1"><stop offset="0" stop-color="#c9d6e2" stop-opacity=".85"/><stop offset="1" stop-color="#9db4c8" stop-opacity=".7"/></linearGradient>
   <filter id="fblur" color-interpolation-filters="sRGB"><feGaussianBlur stdDeviation=".5"/></filter>
  </defs>
  <circle cx="27" cy="20.6" r="18.4" fill="url(#orb)" stroke="#7fb6dc" stroke-opacity=".9" stroke-width="1.1"/>
  <path d="M9.3 18.8 A17.8 17.8 0 0 1 44.7 18.8 Q36 23.5 27 20 Q18 16.8 9.3 18.8Z" fill="url(#orbhi)"/>
  <g filter="url(#fblur)">
  <path d="M19 9.8 Q23.5 7.2 27.8 9.6 L26.4 18.6 Q22 16.4 17.6 18.6Z" fill="#ee5a22"/>
  <path d="M29.4 10.6 Q33.6 13 38.4 10.8 L37 20 Q32.4 22.4 28 20Z" fill="#8cc63e"/>
  <path d="M17.2 20.4 Q21.8 18.2 26 20.4 L24.6 29.6 Q20.4 27.4 15.8 29.6Z" fill="#2f9cf0"/>
  <path d="M27.6 21.8 Q32.2 24.2 36.6 21.8 L35.2 30.8 Q30.8 33.2 26.2 30.8Z" fill="#fcc52c"/>
  <path d="M20 11.5 Q23.5 9.6 26.6 11 L26 14 Q23 13 19.6 14.4Z" fill="#f9a070" opacity=".55"/>
  <path d="M18 22 Q21.6 20.4 24.8 21.8 L24.3 24.6 Q21 23.6 17.6 25Z" fill="#9fd4ff" opacity=".6"/>
  </g>
 </svg>
 <!-- explorer -->
 <div class="tb" style="left:108px;width:10px;opacity:.8;border-left:none;border-radius:0 3px 3px 0"></div>
 <div class="tb" style="left:60px;width:54px;background:linear-gradient(180deg, rgba(170,210,240,.75) 0%, rgba(120,180,225,.7) 45%, rgba(90,160,212,.7) 50%, rgba(110,178,226,.7) 100%);">
  <svg width="34" height="32" viewBox="0 0 34 32" style="position:absolute;left:9px;top:3px">
   <path d="M2 6 H13 L15 8 H30 V28 H2Z" fill="#f2d98a" stroke="#d6b65a" stroke-width=".8"/>
   <rect x="4" y="4" width="4" height="2.4" fill="#3a9a3a"/><rect x="12" y="6" width="4" height="2.4" fill="#c8402a"/><rect x="20" y="8" width="4" height="2.4" fill="#3a6ab8"/>
   <path d="M18 9 H30 V13 H18Z" fill="#fbf3d6"/>
   <path d="M2 12 H30 V28 H2Z" fill="#f6e29a" stroke="#dcc06a" stroke-width=".6"/>
   <path d="M7 19 H25 V30 H21 V24 H11 V30 H7Z" fill="#a8d4f0" stroke="#d9eefb" stroke-width=".8"/>
   <rect x="7" y="19" width="18" height="3" fill="#cfe8f8"/>
  </svg>
 </div>
 <!-- dragonfly app -->
 <div class="tb" style="left:121px;width:59px;background:linear-gradient(180deg, rgba(150,200,236,.5) 0%, rgba(115,180,224,.5) 45%, rgba(90,162,212,.5) 50%, rgba(100,172,222,.55) 100%);">
  <svg width="34" height="34" viewBox="0 0 34 34" style="position:absolute;left:12px;top:2px">
   <rect x="1" y="1" width="31" height="31" rx="4" fill="#dedede" stroke="#2a3a4a" stroke-width="1"/>
   <g fill="#e0102c">
    <ellipse cx="16.5" cy="9" rx="3.6" ry="2.6"/>
    <rect x="14.6" y="8" width="3.8" height="20" rx="1.8"/>
    <path d="M15 11 Q6 8 2.5 12 Q6 15 15 14Z M18 11 Q27 8 30.5 12 Q27 15 18 14Z"/>
    <path d="M15 14 Q8 14 5.5 18 Q10 19.5 15 16.5Z M18 14 Q25 14 27.5 18 Q23 19.5 18 16.5Z"/>
   </g>
   <circle cx="14.8" cy="7" r="1.2" fill="#6a1a24"/><circle cx="18.2" cy="7" r="1.2" fill="#6a1a24"/>
  </svg>
 </div>
 <!-- virtualbox active -->
 <div class="tb" style="left:232px;width:10px;opacity:.85;background:rgba(200,225,245,.6);border-left:none;border-radius:0 3px 3px 0"></div>
 <div class="tb" style="left:184px;width:54px;background:linear-gradient(180deg, rgba(225,238,250,.92) 0%, rgba(196,220,242,.9) 45%, rgba(170,204,234,.9) 50%, rgba(190,218,242,.9) 100%);">
  <svg width="30" height="33" style="position:absolute;left:11px;top:3px"><use href="#vbox" width="30" height="33"/></svg>
 </div>
 <!-- word -->
 <div class="tb" style="left:245px;width:60px;background:linear-gradient(180deg, rgba(150,200,236,.5) 0%, rgba(115,180,224,.5) 45%, rgba(90,162,212,.5) 50%, rgba(100,172,222,.55) 100%);">
  <svg width="34" height="34" viewBox="0 0 34 34" style="position:absolute;left:12px;top:2px">
   <path d="M3 28 V8 Q3 3 9 3 H26 V28Z" fill="#3b5ea8" stroke="#e8eef8" stroke-width="1"/>
   <path d="M3 28 V8 Q3 3 9 3 H11 V28Z" fill="#2a4688"/>
   <path d="M10 6 L30 5.5 L29 31 L8.5 28.5Z" fill="#f4f6fb" stroke="#c8d2e6" stroke-width=".6"/>
   <text x="11.5" y="17" font-family="Liberation Sans,sans-serif" font-weight="bold" font-style="italic" font-size="11" fill="#2a4a9a">W</text>
   <g fill="#2a4a9a"><rect x="22" y="9" width="6" height="1.6"/><rect x="22" y="12" width="6" height="1.6"/><rect x="22" y="15" width="6" height="1.6"/><rect x="11.5" y="19.5" width="16" height="1.6"/><rect x="11.5" y="22.5" width="16" height="1.6"/><rect x="11.5" y="25.5" width="16" height="1.6"/></g>
  </svg>
 </div>
 <!-- tray -->
 <svg width="130" height="40" viewBox="0 0 130 40" style="position:absolute;left:890px;top:0">
  <!-- keyboard -->
  <g transform="translate(9 10)">
   <rect x=".5" y="6" width="13.5" height="8" rx="1" fill="#e9e6df" stroke="#f7f5f0" stroke-width=".8"/>
   <g fill="#8f8a80"><rect x="2" y="8" width="10.5" height="1"/><rect x="2" y="10" width="10.5" height="1"/><rect x="3" y="12" width="8.5" height="1"/></g>
   <path d="M2 5 Q5 1.5 8 3.5 T13 1" fill="none" stroke="#d8d4ca" stroke-width="1"/>
  </g>
  <!-- help -->
  <circle cx="38.5" cy="18" r="7.3" fill="#1c2aa8" stroke="#c9d2f4" stroke-width="1.2"/>
  <text x="38.5" y="22.5" font-family="Liberation Sans,sans-serif" font-weight="bold" font-size="12.5" text-anchor="middle" fill="#fff">?</text>
  <!-- restore -->
  <rect x="59.5" y="9.5" width="5" height="3" fill="none" stroke="#fff" stroke-width="1.2"/>
  <rect x="57" y="11.5" width="5" height="3" fill="#1f4f8c" stroke="#fff" stroke-width="1.2"/>
  <path d="M57 21.5 H63 L60 24.8Z" fill="#fff"/>
  <!-- up -->
  <path d="M75 23 H82.4 L78.7 19Z" fill="#fff"/>
  <!-- network -->
  <g transform="translate(95 13)">
   <rect x="4.5" y="2.5" width="10" height="8" fill="#10243a" stroke="#fff" stroke-width="1.4"/>
   <rect x="8" y="11" width="3" height="2" fill="#fff"/><rect x="5" y="13" width="9" height="1.4" fill="#fff"/>
   <path d="M1 0 V5 H5 V0 M3 5 V13.5 H5" fill="none" stroke="#fff" stroke-width="1.3"/>
  </g>
  <!-- show desktop -->
  <rect x="120.5" y="1.5" width="12" height="38" fill="rgba(255,255,255,.12)" stroke="rgba(255,255,255,.45)" stroke-width="1"/>
  <rect x="119.5" y="1" width="1" height="39" fill="rgba(10,30,60,.6)"/>
 </svg>
</div>

</body>
</html>
